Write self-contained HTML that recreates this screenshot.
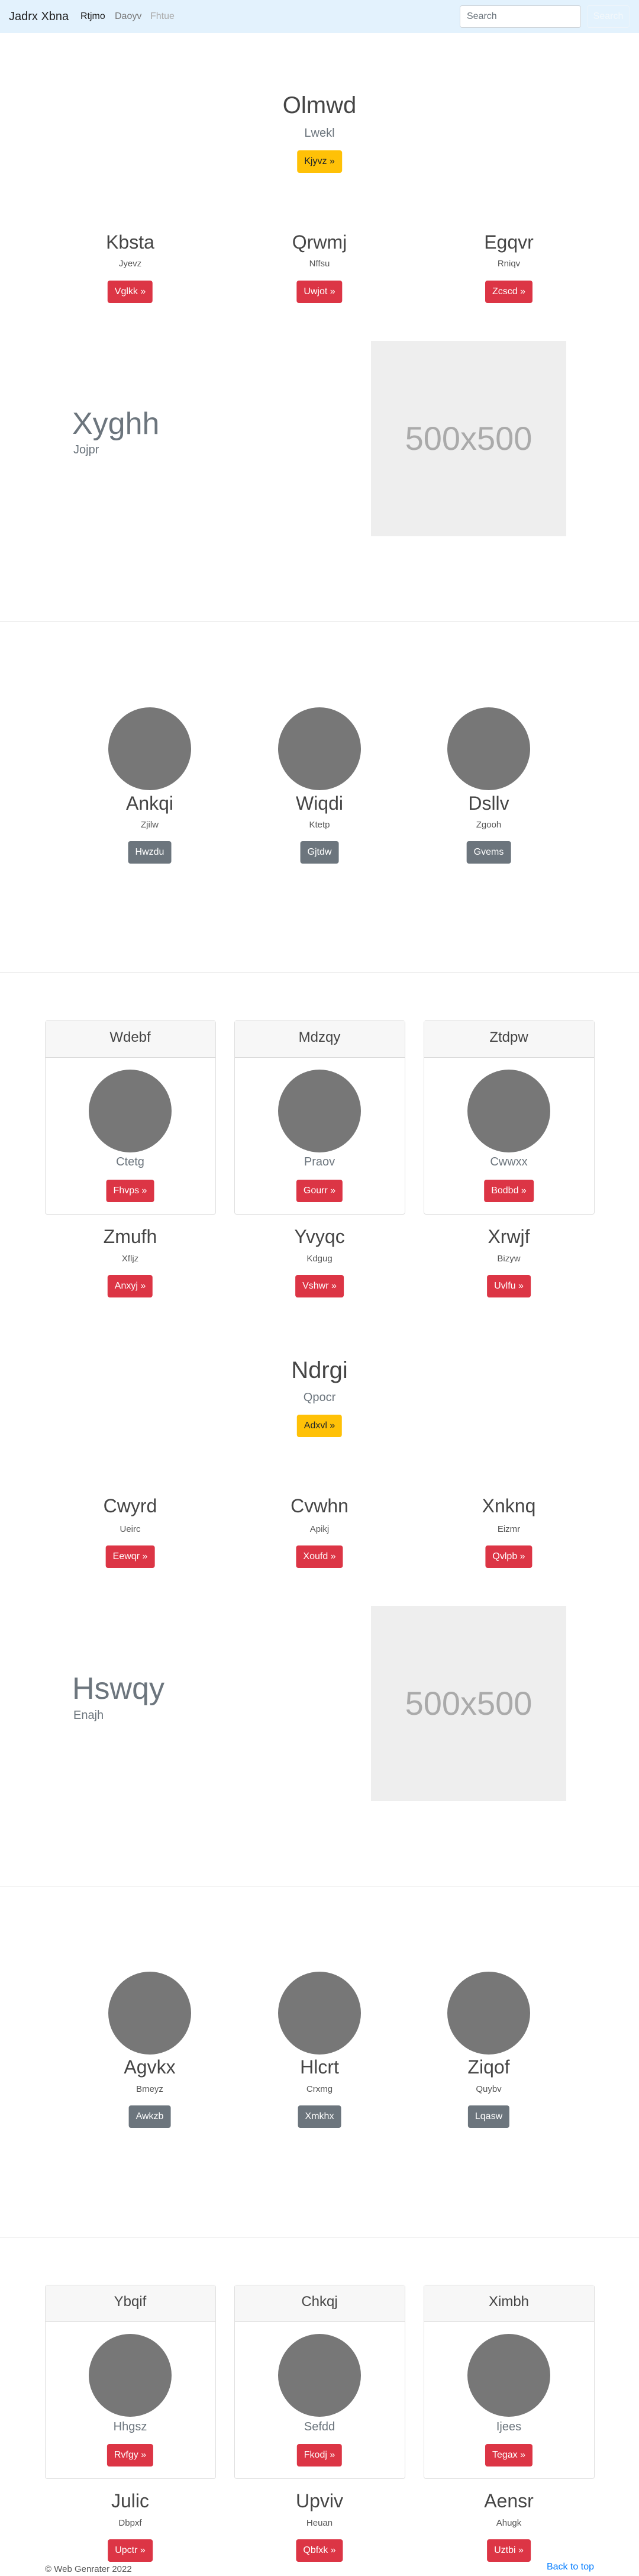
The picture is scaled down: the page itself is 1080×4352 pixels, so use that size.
<!DOCTYPE html>
<html><head><meta charset="utf-8"><style>
*{margin:0;padding:0;box-sizing:border-box}
body{width:1080px;height:4352px;position:relative;background:#fff;font-family:"Liberation Sans",sans-serif;color:#444;overflow:hidden}
.a{position:absolute;white-space:nowrap}
.t{position:absolute;white-space:nowrap;transform:translateX(-50%);text-align:center}
.h1{font-size:40px;line-height:48px;font-weight:500;color:#454545}
.h2{font-size:32px;line-height:38px;font-weight:500;color:#454545}
.h2l{font-size:32px;line-height:38px;font-weight:300;color:#454545}
.h3{font-size:24px;line-height:30px;font-weight:500;color:#454545}
.lead{font-size:20px;line-height:26px;font-weight:300;color:#6c757d}
.p{font-size:15px;line-height:22px;color:#555}
.btn{height:38px;line-height:38px;padding:0 12px;border-radius:4px;font-size:16px}
.y{background:#ffc107;color:#212529}
.r{background:#dc3545;color:#fff}
.g{background:#6c757d;color:#fff}
.circ{position:absolute;width:140px;height:140px;border-radius:50%;background:#777;transform:translateX(-50%)}
.hr{position:absolute;left:0;width:1080px;height:1px;background:#e0e0e0}
.card{position:absolute;width:289px;border:1px solid rgba(0,0,0,.125);border-radius:4px}
.ch{position:absolute;left:0;top:0;width:100%;background:#f7f7f7;border-bottom:1px solid rgba(0,0,0,.125)}
.box{position:absolute;left:627px;width:330px;height:330px;background:#eee;color:#aaa;font-size:56px;text-align:center;line-height:330px}
.disp{font-size:52px;line-height:64px;font-weight:300;color:#6c757d}
</style></head><body>
<div class="a" style="left:0;top:0;width:1080px;height:56px;background:#e3f2fd"></div>
<div class="a" style="left:15px;top:15px;font-size:20px;line-height:26px;color:#222">Jadrx Xbna</div>
<div class="a" style="left:136px;top:17px;font-size:16px;line-height:22px;color:#222">Rtjmo</div>
<div class="a" style="left:194px;top:17px;font-size:16px;line-height:22px;color:#777">Daoyv</div>
<div class="a" style="left:254px;top:17px;font-size:16px;line-height:22px;color:#aaa">Fhtue</div>
<div class="a" style="left:777px;top:9px;width:205px;height:38px;border:1px solid #ced4da;border-radius:4px;background:#fff;font-size:16px;line-height:36px;padding-left:11px;color:#6c757d">Search</div>
<div class="a" style="left:992px;top:9px;width:72px;height:38px;border:1px solid #eef4fa;border-radius:4px;font-size:16px;line-height:36px;text-align:center;color:#f4f8fb">Search</div>

<div class="t h1" style="left:540px;top:154px">Olmwd</div>
<div class="t lead" style="left:540px;top:212px">Lwekl</div>
<div class="t btn y" style="left:540px;top:254px">Kjyvz »</div>

<div class="t h2" style="left:220px;top:390px">Kbsta</div>
<div class="t h2" style="left:540px;top:390px">Qrwmj</div>
<div class="t h2" style="left:860px;top:390px">Egqvr</div>
<div class="t p" style="left:220px;top:435px">Jyevz</div>
<div class="t p" style="left:540px;top:435px">Nffsu</div>
<div class="t p" style="left:860px;top:435px">Rniqv</div>
<div class="t btn r" style="left:220px;top:474px">Vglkk »</div>
<div class="t btn r" style="left:540px;top:474px">Uwjot »</div>
<div class="t btn r" style="left:860px;top:474px">Zcscd »</div>

<div class="a disp" style="left:122px;top:684px">Xyghh</div>
<div class="a lead" style="left:124px;top:747px">Jojpr</div>
<div class="box" style="top:576px">500x500</div>
<div class="hr" style="top:1050px"></div>

<div class="circ" style="left:253px;top:1195px"></div>
<div class="circ" style="left:540px;top:1195px"></div>
<div class="circ" style="left:826px;top:1195px"></div>
<div class="t h2l" style="left:253px;top:1338px">Ankqi</div>
<div class="t h2l" style="left:540px;top:1338px">Wiqdi</div>
<div class="t h2l" style="left:826px;top:1338px">Dsllv</div>
<div class="t p" style="left:253px;top:1383px">Zjilw</div>
<div class="t p" style="left:540px;top:1383px">Ktetp</div>
<div class="t p" style="left:826px;top:1383px">Zgooh</div>
<div class="t btn g" style="left:253px;top:1421px">Hwzdu</div>
<div class="t btn g" style="left:540px;top:1421px">Gjtdw</div>
<div class="t btn g" style="left:826px;top:1421px">Gvems</div>
<div class="hr" style="top:1643px"></div>

<div class="card" style="left:76px;top:1724px;height:328px"><div class="ch" style="height:62px"></div></div>
<div class="card" style="left:396px;top:1724px;height:328px"><div class="ch" style="height:62px"></div></div>
<div class="card" style="left:716px;top:1724px;height:328px"><div class="ch" style="height:62px"></div></div>
<div class="t h3" style="left:220px;top:1738px">Wdebf</div>
<div class="t h3" style="left:540px;top:1738px">Mdzqy</div>
<div class="t h3" style="left:860px;top:1738px">Ztdpw</div>
<div class="circ" style="left:220px;top:1807px"></div>
<div class="circ" style="left:540px;top:1807px"></div>
<div class="circ" style="left:860px;top:1807px"></div>
<div class="t lead" style="left:220px;top:1950px">Ctetg</div>
<div class="t lead" style="left:540px;top:1950px">Praov</div>
<div class="t lead" style="left:860px;top:1950px">Cwwxx</div>
<div class="t btn r" style="left:220px;top:1993px">Fhvps »</div>
<div class="t btn r" style="left:540px;top:1993px">Gourr »</div>
<div class="t btn r" style="left:860px;top:1993px">Bodbd »</div>
<div class="t h2" style="left:220px;top:2070px">Zmufh</div>
<div class="t h2" style="left:540px;top:2070px">Yvyqc</div>
<div class="t h2" style="left:860px;top:2070px">Xrwjf</div>
<div class="t p" style="left:220px;top:2116px">Xfljz</div>
<div class="t p" style="left:540px;top:2116px">Kdgug</div>
<div class="t p" style="left:860px;top:2116px">Bizyw</div>
<div class="t btn r" style="left:220px;top:2154px">Anxyj »</div>
<div class="t btn r" style="left:540px;top:2154px">Vshwr »</div>
<div class="t btn r" style="left:860px;top:2154px">Uvlfu »</div>

<div class="t h1" style="left:540px;top:2291px">Ndrgi</div>
<div class="t lead" style="left:540px;top:2348px">Qpocr</div>
<div class="t btn y" style="left:540px;top:2390px">Adxvl »</div>
<div class="t h2" style="left:220px;top:2525px">Cwyrd</div>
<div class="t h2" style="left:540px;top:2525px">Cvwhn</div>
<div class="t h2" style="left:860px;top:2525px">Xnknq</div>
<div class="t p" style="left:220px;top:2573px">Ueirc</div>
<div class="t p" style="left:540px;top:2573px">Apikj</div>
<div class="t p" style="left:860px;top:2573px">Eizmr</div>
<div class="t btn r" style="left:220px;top:2611px">Eewqr »</div>
<div class="t btn r" style="left:540px;top:2611px">Xoufd »</div>
<div class="t btn r" style="left:860px;top:2611px">Qvlpb »</div>

<div class="a disp" style="left:122px;top:2821px">Hswqy</div>
<div class="a lead" style="left:124px;top:2885px">Enajh</div>
<div class="box" style="top:2713px">500x500</div>
<div class="hr" style="top:3186px"></div>

<div class="circ" style="left:253px;top:3331px"></div>
<div class="circ" style="left:540px;top:3331px"></div>
<div class="circ" style="left:826px;top:3331px"></div>
<div class="t h2l" style="left:253px;top:3473px">Agvkx</div>
<div class="t h2l" style="left:540px;top:3473px">Hlcrt</div>
<div class="t h2l" style="left:826px;top:3473px">Ziqof</div>
<div class="t p" style="left:253px;top:3519px">Bmeyz</div>
<div class="t p" style="left:540px;top:3519px">Crxmg</div>
<div class="t p" style="left:826px;top:3519px">Quybv</div>
<div class="t btn g" style="left:253px;top:3557px">Awkzb</div>
<div class="t btn g" style="left:540px;top:3557px">Xmkhx</div>
<div class="t btn g" style="left:826px;top:3557px">Lqasw</div>
<div class="hr" style="top:3779px"></div>

<div class="card" style="left:76px;top:3860px;height:328px"><div class="ch" style="height:62px"></div></div>
<div class="card" style="left:396px;top:3860px;height:328px"><div class="ch" style="height:62px"></div></div>
<div class="card" style="left:716px;top:3860px;height:328px"><div class="ch" style="height:62px"></div></div>
<div class="t h3" style="left:220px;top:3874px">Ybqif</div>
<div class="t h3" style="left:540px;top:3874px">Chkqj</div>
<div class="t h3" style="left:860px;top:3874px">Ximbh</div>
<div class="circ" style="left:220px;top:3943px"></div>
<div class="circ" style="left:540px;top:3943px"></div>
<div class="circ" style="left:860px;top:3943px"></div>
<div class="t lead" style="left:220px;top:4087px">Hhgsz</div>
<div class="t lead" style="left:540px;top:4087px">Sefdd</div>
<div class="t lead" style="left:860px;top:4087px">Ijees</div>
<div class="t btn r" style="left:220px;top:4129px">Rvfgy »</div>
<div class="t btn r" style="left:540px;top:4129px">Fkodj »</div>
<div class="t btn r" style="left:860px;top:4129px">Tegax »</div>
<div class="t h2" style="left:220px;top:4206px">Julic</div>
<div class="t h2" style="left:540px;top:4206px">Upviv</div>
<div class="t h2" style="left:860px;top:4206px">Aensr</div>
<div class="t p" style="left:220px;top:4252px">Dbpxf</div>
<div class="t p" style="left:540px;top:4252px">Heuan</div>
<div class="t p" style="left:860px;top:4252px">Ahugk</div>
<div class="t btn r" style="left:220px;top:4290px">Upctr »</div>
<div class="t btn r" style="left:540px;top:4290px">Qbfxk »</div>
<div class="t btn r" style="left:860px;top:4290px">Uztbi »</div>

<div class="a" style="left:76px;top:4330px;font-size:15px;line-height:22px;color:#555">© Web Genrater 2022</div>
<div class="a" style="right:76px;top:4326px;font-size:16px;line-height:22px;color:#007bff">Back to top</div>
</body></html>
